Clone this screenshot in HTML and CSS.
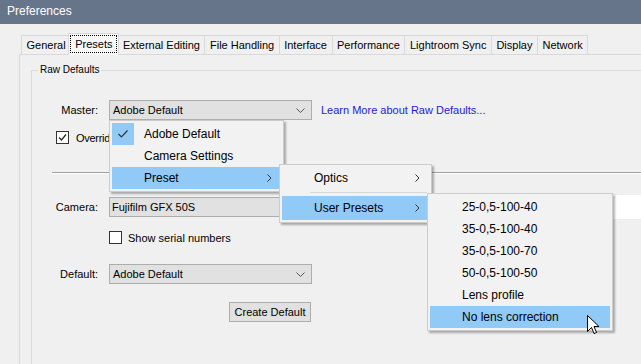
FILE: index.html
```html
<!DOCTYPE html>
<html lang="en">
<head>
    <meta charset="UTF-8">
    <meta name="viewport" content="width=device-width, initial-scale=1.0">
    <title>Preferences</title>
    <link rel="stylesheet" href="styles.css">
</head>
<body>
    <div class="titlebar">Preferences</div>

    <div class="tabs">
        <span class="tab">General</span>
        <span class="tab active"><span class="focus">Presets</span></span>
        <span class="tab">External Editing</span>
        <span class="tab">File Handling</span>
        <span class="tab">Interface</span>
        <span class="tab">Performance</span>
        <span class="tab">Lightroom Sync</span>
        <span class="tab">Display</span>
        <span class="tab">Network</span>
    </div>

    <div class="panel">
        <div class="group">
            <div class="group-title">Raw Defaults</div>

            <div class="row row-master">
                <span class="label">Master:</span>
                <div class="select">
                    <span>Adobe Default</span>
                    <svg class="chevron" width="9" height="5" viewBox="0 0 9 5"><polyline points="0.5,0.5 4.5,4.5 8.5,0.5" fill="none" stroke="#555" stroke-width="1"/></svg>
                </div>
                <span class="link">Learn More about Raw Defaults...</span>
            </div>

            <div class="check-row">
                <span class="checkbox">
                    <svg width="11" height="11" viewBox="0 0 11 11"><polyline points="2,5.5 4.5,8 9,2.5" fill="none" stroke="#222" stroke-width="1.2"/></svg>
                </span>
                <span class="check-label override">Override Master setting for specific cameras</span>
            </div>

            <div class="separator"></div>

            <div class="row row-camera">
                <span class="label">Camera:</span>
                <div class="field">Fujifilm GFX 50S</div>
                <div class="field-blank"></div>
            </div>

            <div class="check-row serial-row">
                <span class="checkbox"></span>
                <span class="check-label">Show serial numbers</span>
            </div>

            <div class="row row-default">
                <span class="label">Default:</span>
                <div class="select">
                    <span>Adobe Default</span>
                    <svg class="chevron" width="9" height="5" viewBox="0 0 9 5"><polyline points="0.5,0.5 4.5,4.5 8.5,0.5" fill="none" stroke="#555" stroke-width="1"/></svg>
                </div>
            </div>

            <div class="button-row">
                <button class="button">Create Default</button>
            </div>
        </div>
    </div>

    <!-- open dropdown menus -->
    <div class="menu menu-main">
        <div class="menu-item">
            <span class="menu-icon checked">
                <svg width="22" height="22" viewBox="0 0 22 22"><polyline points="6.5,11 9.5,14 15.5,7.5" fill="none" stroke="#333" stroke-width="1.2"/></svg>
            </span>
            <span>Adobe Default</span>
        </div>
        <div class="menu-item">
            <span class="menu-icon"></span>
            <span>Camera Settings</span>
        </div>
        <div class="menu-item hover">
            <span class="menu-icon"></span>
            <span>Preset</span>
            <svg class="arrow" width="5" height="8" viewBox="0 0 5 8"><polyline points="0.5,0.5 4,4 0.5,7.5" fill="none" stroke="#333" stroke-width="1"/></svg>
        </div>
    </div>

    <div class="menu menu-preset">
        <div class="menu-item">
            <span class="menu-icon"></span>
            <span>Optics</span>
            <svg class="arrow" width="5" height="8" viewBox="0 0 5 8"><polyline points="0.5,0.5 4,4 0.5,7.5" fill="none" stroke="#333" stroke-width="1"/></svg>
        </div>
        <div class="menu-sep"><span></span></div>
        <div class="menu-item hover tall">
            <span class="menu-icon"></span>
            <span>User Presets</span>
            <svg class="arrow" width="5" height="8" viewBox="0 0 5 8"><polyline points="0.5,0.5 4,4 0.5,7.5" fill="none" stroke="#333" stroke-width="1"/></svg>
        </div>
    </div>

    <div class="menu menu-user">
        <div class="menu-item"><span class="menu-icon"></span><span>25-0,5-100-40</span></div>
        <div class="menu-item"><span class="menu-icon"></span><span>35-0,5-100-40</span></div>
        <div class="menu-item"><span class="menu-icon"></span><span>35-0,5-100-70</span></div>
        <div class="menu-item"><span class="menu-icon"></span><span>50-0,5-100-50</span></div>
        <div class="menu-item"><span class="menu-icon"></span><span>Lens profile</span></div>
        <div class="menu-item hover"><span class="menu-icon"></span><span>No lens correction</span></div>
    </div>

    <svg class="cursor" width="13" height="20" viewBox="0 0 13 20">
        <path d="M0.5,0.5 L0.5,16.5 L4.5,12.5 L7,18.5 L9.5,17.5 L7,11.5 L12,11.5 Z" fill="#fff" stroke="#000" stroke-width="1" stroke-linejoin="round"/>
    </svg>
</body>
</html>
```

FILE: styles.css
```css
* {
    box-sizing: border-box;
}

html,
body {
    margin: 0;
    height: 364px;
    overflow: hidden;
}

body {
    position: relative;
    background: #f0f0f0;
    color: #000;
    font-family: "Liberation Sans", Arial, sans-serif;
    font-size: 11px;
}

.titlebar {
    height: 24px;
    padding-left: 7px;
    background: #67758b;
    color: #fff;
    font-size: 12px;
    line-height: 23px;
}

/* tab strip */
.tabs {
    position: relative;
    z-index: 1;
    display: flex;
    align-items: flex-end;
    height: 21px;
    margin-top: 9px;
    padding-left: 21px;
}

.tab {
    height: 19px;
    padding: 0 4.5px;
    margin-right: -1px;
    border: 1px solid #d9d9d9;
    border-bottom: none;
    background: #f0f0f0;
    line-height: 18px;
    white-space: nowrap;
}

.tab.active {
    position: relative;
    z-index: 1;
    height: 22px;
    margin: 0 -2px -1px -2px;
    padding: 0 1px;
    background: #f8f8f8;
}

.focus {
    display: block;
    margin-top: 1px;
    padding: 0 4px;
    border: 1px dotted #000;
    line-height: 16px;
}

.panel {
    width: 700px;
    height: 400px;
    margin-left: 19px;
    padding-left: 11px;
    border: 1px solid #d9d9d9;
    border-right: none;
}

.group {
    height: 400px;
    margin-top: 15px;
    border: 1px solid #dcdcdc;
}

.group-title {
    display: table;
    margin: -7px 0 0 6px;
    padding: 0 2px;
    background: #f0f0f0;
    font-size: 10px;
    line-height: 12px;
}

.row {
    display: flex;
    align-items: center;
    height: 20px;
}

.row-master {
    margin-top: 24px;
}

.row-camera {
    margin-top: 23px;
}

.row-default {
    margin-top: 20px;
}

.label {
    width: 66px;
    margin-right: 11px;
    text-align: right;
}

.select {
    display: flex;
    align-items: center;
    justify-content: space-between;
    width: 203px;
    height: 20px;
    padding: 0 6px 0 3px;
    border: 1px solid #adadad;
    background: #e1e1e1;
}

.link {
    margin-left: 9px;
    color: #1c1cd6;
}

.check-row {
    display: flex;
    align-items: center;
    height: 13px;
    margin: 11px 0 0 24px;
}

.serial-row {
    margin: 14px 0 0 77px;
}

.checkbox {
    display: flex;
    align-items: center;
    justify-content: center;
    width: 13px;
    height: 13px;
    border: 1px solid #333;
    background: #fff;
}

.check-label {
    margin-left: 7px;
    white-space: nowrap;
}

.check-label.override {
    letter-spacing: -0.3px;
}

.serial-row .check-label {
    margin-left: 6px;
}

.separator {
    height: 2px;
    margin: 28px 0 0 20px;
    border-top: 1px solid #a0a0a0;
    border-bottom: 1px solid #fff;
}

.field {
    width: 504px;
    height: 20px;
    padding-left: 2px;
    border: 1px solid #adadad;
    background: #e1e1e1;
    line-height: 18px;
}

.field-blank {
    flex: 1;
    height: 24px;
    background: #fff;
}

.button-row {
    margin-top: 18px;
    padding-left: 197px;
}

.button {
    width: 82px;
    height: 20px;
    padding: 0;
    border: 1px solid #adadad;
    background: #e1e1e1;
    color: #000;
    font: inherit;
}

/* menus */
.menu {
    position: absolute;
    z-index: 2;
    padding: 2px;
    border: 1px solid #cccccc;
    background: #f2f2f2;
    box-shadow: 2px 2px 2px rgba(0, 0, 0, 0.3);
    font-size: 12px;
}

.menu-main {
    left: 109px;
    top: 120px;
    width: 175px;
}

.menu-preset {
    left: 279px;
    top: 164px;
    width: 153px;
}

.menu-user {
    left: 427px;
    top: 193px;
    width: 186px;
}

.menu-item {
    display: flex;
    align-items: center;
    height: 22px;
    white-space: nowrap;
}

.menu-item.tall {
    height: 24px;
}

.menu-item.hover {
    background: #91c9f7;
}

.menu-icon {
    width: 22px;
    height: 22px;
    margin-right: 10px;
}

.menu-icon.checked {
    background: #91c9f7;
}

.menu-icon svg {
    display: block;
}

.arrow {
    margin-left: auto;
    margin-right: 9px;
}

.menu-sep {
    display: flex;
    align-items: center;
    height: 7px;
    padding: 0 2px 0 28px;
}

.menu-sep span {
    flex: 1;
    height: 1px;
    background: #d7d7d7;
}

.cursor {
    position: absolute;
    z-index: 3;
    left: 587px;
    top: 315px;
}
```
